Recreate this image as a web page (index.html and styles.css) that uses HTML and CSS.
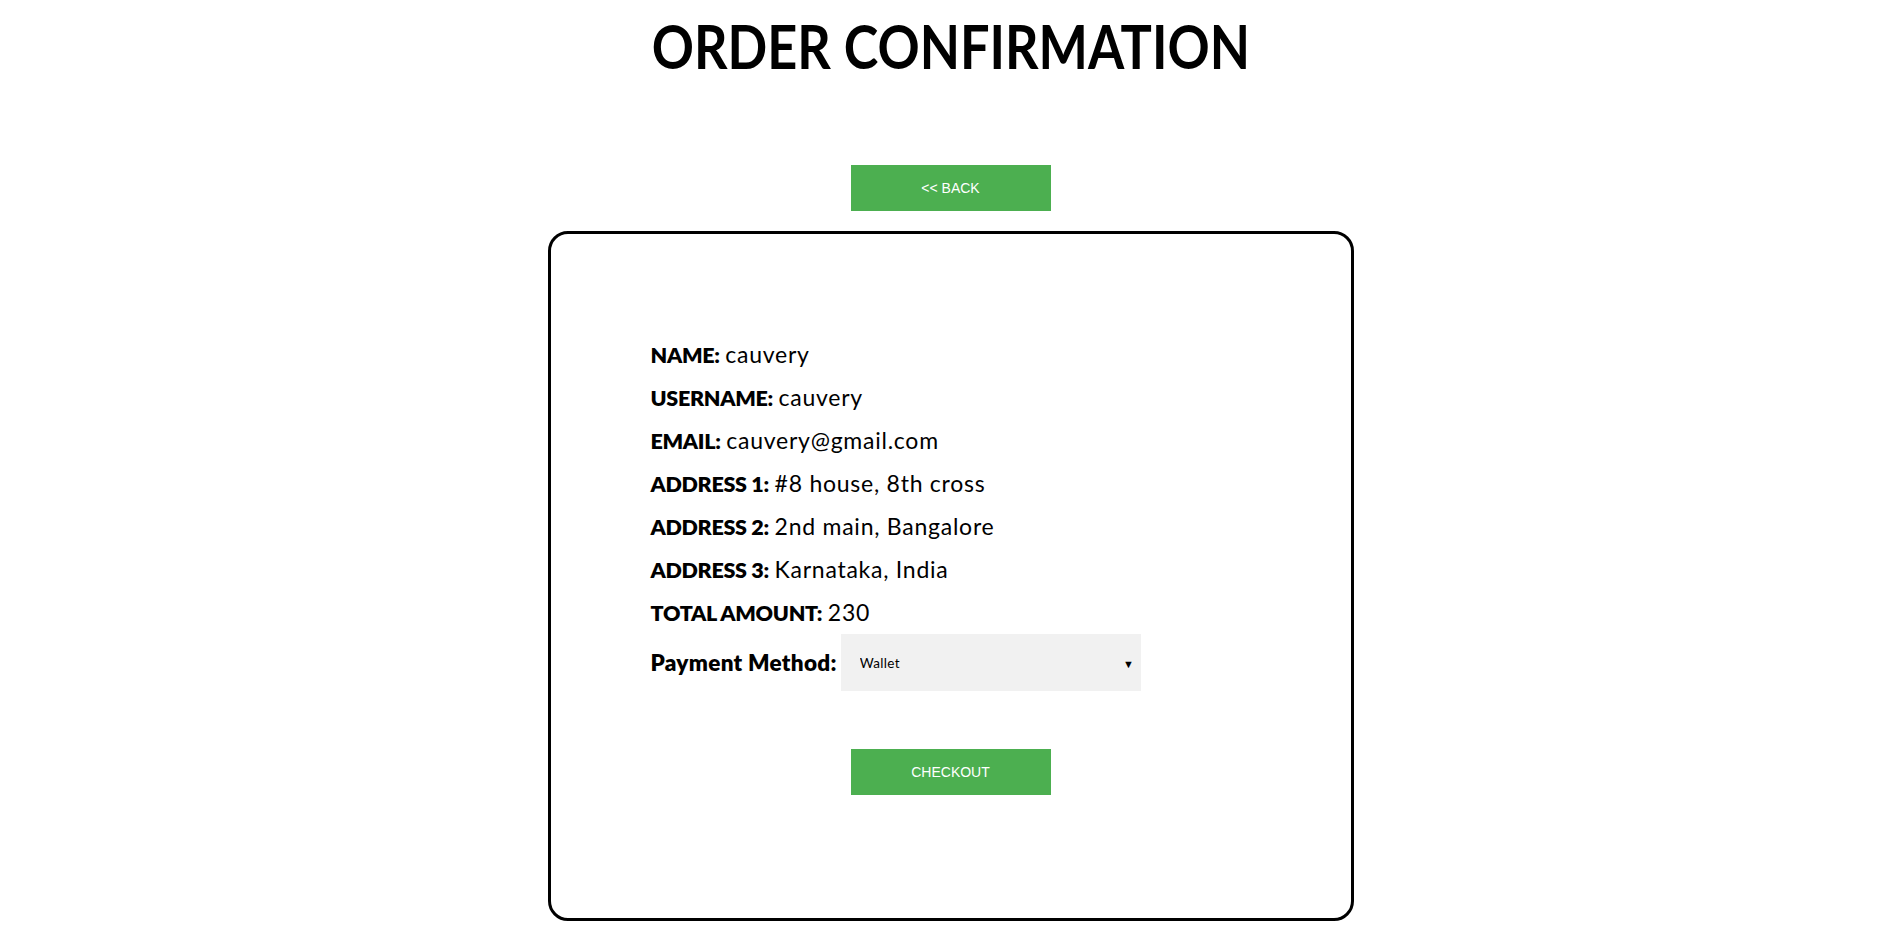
FILE: index.html
```html
<!DOCTYPE html>
<html lang="en">
<head>
<meta charset="utf-8">
<title>Order Confirmation</title>
<link rel="stylesheet" href="styles.css">
</head>
<body>
<div class="page">
  <h1 class="title">ORDER CONFIRMATION</h1>
  <button class="btn back">&lt;&lt; BACK</button>
  <div class="card">
    <div class="details">
      <p class="row"><b>NAME:</b> <span class="val">cauvery</span></p>
      <p class="row"><b>USERNAME:</b> <span class="val">cauvery</span></p>
      <p class="row"><b>EMAIL:</b> <span class="val">cauvery@gmail.com</span></p>
      <p class="row"><b>ADDRESS 1:</b> <span class="val">#8 house, 8th cross</span></p>
      <p class="row"><b>ADDRESS 2:</b> <span class="val">2nd main, Bangalore</span></p>
      <p class="row"><b>ADDRESS 3:</b> <span class="val">Karnataka, India</span></p>
      <p class="row"><b>TOTAL AMOUNT:</b> <span class="val">230</span></p>
      <div class="pay">
        <label class="pay-label" for="pm">Payment Method:</label>
        <div class="select-wrap">
          <select id="pm" class="select">
            <option>Wallet</option>
            <option>Card</option>
            <option>Cash on Delivery</option>
          </select>
          <span class="arrow">&#9660;</span>
        </div>
      </div>
    </div>
    <div class="actions">
      <button class="btn checkout">CHECKOUT</button>
    </div>
  </div>
</div>
</body>
</html>
```

FILE: styles.css
```css
html, body {
  margin: 0;
  padding: 0;
  background: #fff;
}
body {
  font-family: Lato, "Noto Sans", sans-serif;
  color: #000;
}
.page {
  display: flex;
  flex-direction: column;
  align-items: center;
}
.title {
  margin: 0;
  padding-top: 7px;
  height: 165px;
  box-sizing: border-box;
  font-family: Lato, sans-serif;
  font-weight: 700;
  font-size: 62px;
  line-height: 76px;
  transform: scaleX(0.843);
}
.btn {
  width: 200px;
  height: 46px;
  border: none;
  border-radius: 0;
  background: #4caf50;
  color: #fff;
  font-family: "Liberation Sans", Arial, sans-serif;
  font-size: 14px;
  padding: 0;
  cursor: pointer;
}
.back {
  margin-bottom: 20px;
}
.card {
  width: 806px;
  box-sizing: border-box;
  border: 3px solid #000;
  border-radius: 20px;
  padding: 99px 100px 123px 100px;
}
.details {
  display: flex;
  flex-direction: column;
}
.row {
  margin: 0;
  font-size: 22px;
  line-height: 43px;
  height: 43px;
  white-space: nowrap;
}
.row b {
  font-weight: 800;
  font-size: 21.5px;
  letter-spacing: -0.3px;
}
.val {
  font-size: 23px;
  letter-spacing: 0.75px;
}
.pay {
  display: flex;
  align-items: center;
  gap: 4px;
}
.pay-label {
  font-size: 22.5px;
  font-weight: 800;
  letter-spacing: 0.3px;
}
.select-wrap {
  position: relative;
  width: 300px;
  height: 57px;
}
.select {
  appearance: none;
  -webkit-appearance: none;
  width: 100%;
  height: 100%;
  border: none;
  border-radius: 0;
  background: #f1f1f1;
  padding: 0 19px;
  font-family: Lato, sans-serif;
  font-size: 13.5px;
  letter-spacing: 0.3px;
  color: #000;
  outline: none;
}
.arrow {
  position: absolute;
  right: 7px;
  top: 50%;
  transform: translateY(-50%);
  font-size: 11px;
  pointer-events: none;
}
.actions {
  display: flex;
  justify-content: center;
  margin-top: 58px;
}
```
